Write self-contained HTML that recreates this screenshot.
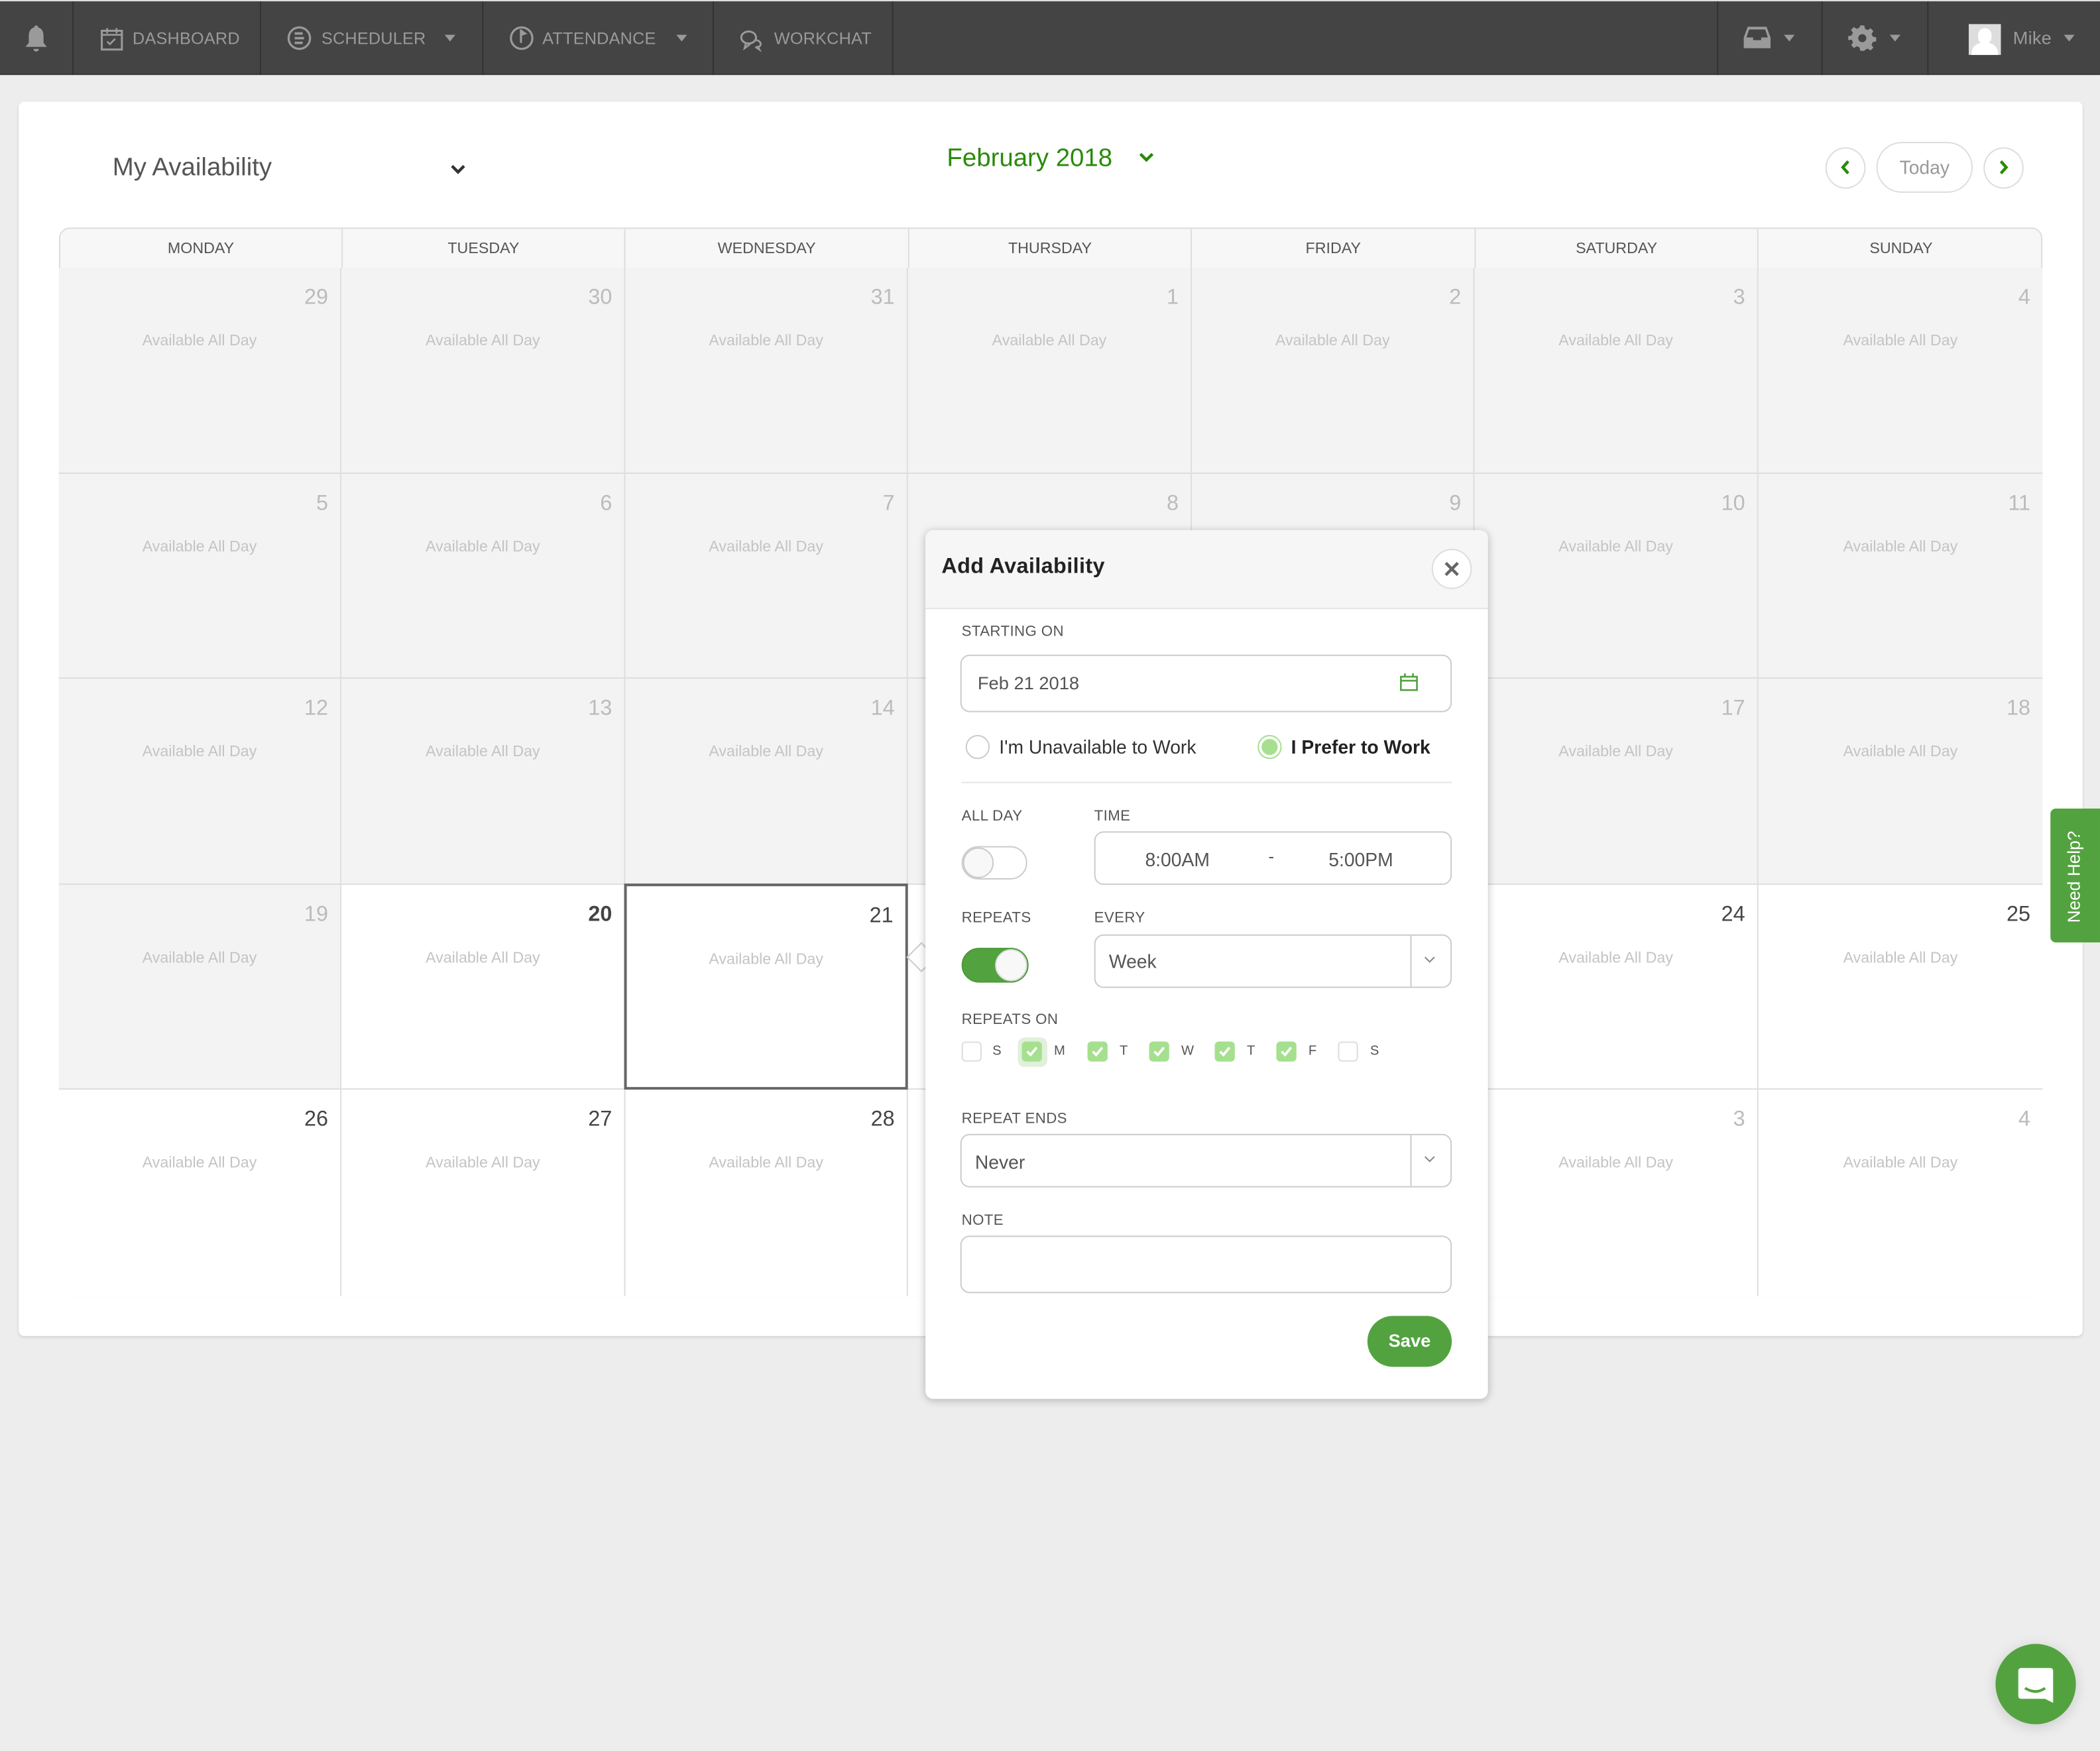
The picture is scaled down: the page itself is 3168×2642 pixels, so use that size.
<!DOCTYPE html>
<html><head><meta charset="utf-8"><style>
*{box-sizing:border-box;margin:0;padding:0}
html,body{width:3168px;height:2642px;overflow:hidden;background:#ededed}
#s{position:absolute;left:0;top:0;width:1568px;height:1308px;transform:scale(2.0204,2.0199);transform-origin:0 0;font-family:"Liberation Sans",sans-serif;color:#555}
.a{position:absolute}
#nav{left:0;top:1px;width:1568px;height:55px;background:#444;border-bottom:1px solid #3a3a3a}
.ni{position:absolute;top:0;height:55px;border-right:1px solid #333;color:#9a9a9a;font-size:12.5px;line-height:56px;letter-spacing:.1px}
.car{display:inline-block;width:0;height:0;border-left:4px solid transparent;border-right:4px solid transparent;border-top:5px solid #9a9a9a;vertical-align:middle}
#card{left:14px;top:76px;width:1541px;height:922px;background:#fff;border-radius:4px;box-shadow:0 1px 2px rgba(0,0,0,.12)}
#cal{left:44px;top:170px;width:1481px;height:798px;border:1px solid #dcdcdc;border-radius:8px;overflow:hidden;background:#fff}
.hd{position:absolute;top:0;height:30px;line-height:30px;text-align:center;font-size:11.5px;color:#555;background:#f7f7f7;border-right:1px solid #ddd;border-bottom:1px solid #ddd}
.c{position:absolute;border-right:1px solid #ddd;border-bottom:1px solid #ddd;background:#f3f3f3}
.c.w{background:#fff}
.c .n{position:absolute;right:9px;top:14px;font-size:16px;color:#bbb}
.c .n.d{color:#444}
.c .n.b{font-weight:bold;color:#444}
.c .t{position:absolute;left:0;right:0;top:49px;text-align:center;font-size:11.5px;color:#c4c4c4}
#pop{left:691px;top:396px;width:420px;height:649px;background:#fff;border-radius:6px;box-shadow:0 1px 6px rgba(0,0,0,.25)}
.lb{position:absolute;font-size:11px;color:#555;letter-spacing:.2px}
.box{position:absolute;border:1px solid #ccc;border-radius:7px;background:#fff}
.cb{position:absolute;top:778px;width:15px;height:15px;border-radius:3px}
.cb.on{background:#a5e08f}
.cb.off{border:1px solid #ddd;background:#fff}
.cb svg{position:absolute;left:3px;top:3px}
.cl{position:absolute;top:780px;font-size:10px;color:#555}
</style></head><body><div id="s">
<div class="a" style="left:0;top:0;width:1568px;height:1px;background:#ddd"></div>
<div id="nav" class="a">
 <div class="ni" style="left:0;width:55px"><svg class="a" style="left:17px;top:17px" width="20" height="22" viewBox="0 0 20 22"><path d="M10 1c-1 0-1.5.8-1.5 1.5C5.5 3.3 4.5 6 4.5 9v5L2 17h16l-2.5-3V9c0-3-1-5.7-4-6.5C11.5 1.8 11 1 10 1z M8 18.5a2 2 0 0 0 4 0z" fill="#9a9a9a"/></svg></div>
 <div class="ni" style="left:55px;width:140px"><svg class="a" style="left:20px;top:19px" width="17" height="18" viewBox="0 0 17 18"><rect x="1" y="3" width="15" height="14" fill="none" stroke="#9a9a9a" stroke-width="1.5"/><path d="M1 6h15M5 1v4M12 1v4M5 11l2 2 4-4" stroke="#9a9a9a" stroke-width="1.3" fill="none"/></svg><span class="a" style="left:44px">DASHBOARD</span></div>
 <div class="ni" style="left:195px;width:166px"><svg class="a" style="left:19px;top:18px" width="19" height="19" viewBox="0 0 19 19"><circle cx="9.5" cy="9.5" r="8" fill="none" stroke="#9a9a9a" stroke-width="1.6"/><path d="M6 6h6M6 9.5h7M6 13h6" stroke="#9a9a9a" stroke-width="1.8"/></svg><span class="a" style="left:45px">SCHEDULER</span><span class="car a" style="left:137px;top:25px"></span></div>
 <div class="ni" style="left:361px;width:172px"><svg class="a" style="left:19px;top:18px" width="19" height="19" viewBox="0 0 19 19"><circle cx="9.5" cy="9.5" r="8" fill="none" stroke="#9a9a9a" stroke-width="1.6"/><path d="M9 3v10M9 4l3 2-3 1" stroke="#9a9a9a" stroke-width="1.6" fill="#9a9a9a"/></svg><span class="a" style="left:44px">ATTENDANCE</span><span class="car a" style="left:144px;top:25px"></span></div>
 <div class="ni" style="left:533px;width:134px"><svg class="a" style="left:19px;top:20px" width="18" height="18" viewBox="0 0 18 18"><ellipse cx="7" cy="7" rx="5.5" ry="4.5" fill="none" stroke="#9a9a9a" stroke-width="1.5"/><path d="M5 11l-1 4 4-3M12 9c3 0 4 2 4 3s-1 2-2 2l1 2-3-2" stroke="#9a9a9a" stroke-width="1.4" fill="none"/></svg><span class="a" style="left:45px">WORKCHAT</span></div>
 <div class="ni" style="left:1282px;width:79px;border-left:1px solid #333"><svg class="a" style="left:18px;top:18px" width="22" height="18" viewBox="0 0 22 18"><path d="M4 1h14l3 8v8H1V9z" fill="#9a9a9a"/><path d="M5 3h12l2 6h-5v2H8V9H3z" fill="#444"/></svg><span class="car a" style="left:49px;top:25px"></span></div>
 <div class="ni" style="left:1361px;width:79px"><svg class="a" style="left:19px;top:17px" width="21" height="21" viewBox="0 0 21 21"><path d="M9 1h3l.5 2.5 2 1 2.2-1.4 2.1 2.1-1.4 2.2 1 2 2.5.5v3l-2.5.5-1 2 1.4 2.2-2.1 2.1-2.2-1.4-2 1L12 20H9l-.5-2.5-2-1-2.2 1.4-2.1-2.1 1.4-2.2-1-2L0 12V9l2.5-.5 1-2-1.4-2.2 2.1-2.1 2.200 1.4 2-1z" fill="#9a9a9a"/><circle cx="10.5" cy="10.5" r="3" fill="#444"/></svg><span class="car a" style="left:50px;top:25px"></span></div>
 <div class="ni" style="left:1440px;width:128px;border-right:none;font-size:13.5px"><div class="a" style="left:30px;top:17px;width:24px;height:23px;background:#ddd;overflow:hidden"><div class="a" style="left:7px;top:3px;width:10px;height:12px;border-radius:5px;background:#fff"></div><div class="a" style="left:2px;top:14px;width:20px;height:12px;border-radius:8px 8px 0 0;background:#fff"></div></div><span class="a" style="left:63px">Mike</span><span class="car a" style="left:101px;top:25px"></span></div>
</div>

<div id="card" class="a"></div>
<div class="a" style="left:84px;top:115px;font-size:19px;color:#555">My Availability</div>
<svg class="a" style="left:336px;top:122px" width="12" height="9" viewBox="0 0 12 9"><path d="M1.5 2l4.5 4.5L10.5 2" stroke="#333" stroke-width="2.2" fill="none"/></svg>
<div class="a" style="left:707px;top:108px;font-size:19px;color:#2a8a0a">February 2018</div>
<svg class="a" style="left:850px;top:113px" width="12" height="9" viewBox="0 0 12 9"><path d="M1.5 2l4.5 4.5L10.5 2" stroke="#2a8a0a" stroke-width="2.2" fill="none"/></svg>
<div class="a" style="left:1363px;top:110px;width:30px;height:31px;border:1px solid #ddd;border-radius:50%"></div>
<svg class="a" style="left:1373px;top:119px" width="10" height="12" viewBox="0 0 10 12"><path d="M7 1.5L3 6l4 4.5" stroke="#2a8a0a" stroke-width="2.2" fill="none"/></svg>
<div class="a" style="left:1401px;top:106px;width:72px;height:38px;border:1px solid #ddd;border-radius:19px;text-align:center;line-height:36px;font-size:14px;color:#999">Today</div>
<div class="a" style="left:1481px;top:110px;width:30px;height:31px;border:1px solid #ddd;border-radius:50%"></div>
<svg class="a" style="left:1491px;top:119px" width="10" height="12" viewBox="0 0 10 12"><path d="M3 1.5L7 6l-4 4.5" stroke="#2a8a0a" stroke-width="2.2" fill="none"/></svg>

<div id="cal" class="a">
<div class="hd" style="left:0;width:211px">MONDAY</div>
<div class="hd" style="left:211px;width:211px">TUESDAY</div>
<div class="hd" style="left:422px;width:212px">WEDNESDAY</div>
<div class="hd" style="left:634px;width:211px">THURSDAY</div>
<div class="hd" style="left:845px;width:212px">FRIDAY</div>
<div class="hd" style="left:1057px;width:211px">SATURDAY</div>
<div class="hd" style="left:1268px;width:213px;border-right:none">SUNDAY</div>
</div>
<div id="cells"></div>

<div class="a" style="left:1531px;top:604px;width:37px;height:100px;background:#52a33f;border-radius:4px 0 0 4px"></div>
<div class="a" style="left:1500px;top:646px;width:100px;height:18px;transform:rotate(-90deg);color:#fff;font-size:13px;text-align:center">Need Help?</div>

<div class="a" style="left:680px;top:707px;width:16px;height:16px;background:#fff;border:1px solid #ccc;transform:rotate(45deg)"></div>
<div id="pop" class="a">
 <div class="a" style="left:0;top:0;width:420px;height:59px;background:#f6f6f6;border-bottom:1px solid #e5e5e5;border-radius:6px 6px 0 0"></div>
 <div class="a" style="left:12px;top:19px;font-size:16px;color:#222;font-weight:bold;letter-spacing:.2px">Add Availability</div>
 <div class="a" style="left:378px;top:14px;width:30px;height:30px;border:1px solid #ddd;border-radius:50%;background:#fff"></div>
 <svg class="a" style="left:387px;top:23px" width="12" height="12" viewBox="0 0 12 12"><path d="M1.5 1.5l9 9M10.5 1.5l-9 9" stroke="#666" stroke-width="2.2"/></svg>
</div>
<div class="lb" style="left:718px;top:466px">STARTING ON</div>
<div class="box" style="left:717px;top:489px;width:367px;height:43px"></div>
<div class="a" style="left:730px;top:503px;font-size:13.5px;color:#555">Feb 21 2018</div>
<svg class="a" style="left:1045px;top:502px" width="14" height="15" viewBox="0 0 14 15"><rect x="1" y="3.5" width="12" height="10" fill="none" stroke="#52a33f" stroke-width="1.3"/><path d="M1 6.5h12M4 1v3M10 1v3" stroke="#52a33f" stroke-width="1.3"/></svg>
<div class="a" style="left:721px;top:549px;width:18px;height:18px;border:1px solid #ccc;border-radius:50%"></div>
<div class="a" style="left:746px;top:550px;font-size:14px;color:#333">I'm Unavailable to Work</div>
<div class="a" style="left:939px;top:549px;width:18px;height:18px;border:1px solid #a5e08f;border-radius:50%"></div>
<div class="a" style="left:942px;top:552px;width:12px;height:12px;background:#a5e08f;border-radius:50%"></div>
<div class="a" style="left:964px;top:550px;font-size:14px;color:#222;font-weight:bold">I Prefer to Work</div>
<div class="a" style="left:718px;top:584px;width:366px;height:1px;background:#e5e5e5"></div>
<div class="lb" style="left:718px;top:604px">ALL DAY</div>
<div class="lb" style="left:817px;top:604px">TIME</div>
<div class="a" style="left:718px;top:632px;width:49px;height:25px;border:1px solid #ccc;border-radius:13px;background:#fff"></div>
<div class="a" style="left:719px;top:633px;width:23px;height:23px;border-radius:50%;background:#f8f8f8;border:1px solid #ccc"></div>
<div class="box" style="left:817px;top:621px;width:267px;height:40px"></div>
<div class="a" style="left:855px;top:634px;font-size:14px;color:#555">8:00AM</div>
<div class="a" style="left:947px;top:632px;font-size:13px;color:#555">-</div>
<div class="a" style="left:992px;top:634px;font-size:14px;color:#555">5:00PM</div>
<div class="lb" style="left:718px;top:680px">REPEATS</div>
<div class="lb" style="left:817px;top:680px">EVERY</div>
<div class="a" style="left:718px;top:708px;width:50px;height:26px;border-radius:13px;background:#52a33f;border:1px solid #4a9a38"></div>
<div class="a" style="left:743px;top:709px;width:24px;height:24px;border-radius:50%;background:#f8f8f8;border:1px solid #ddd"></div>
<div class="box" style="left:817px;top:698px;width:267px;height:40px"></div>
<div class="a" style="left:1053px;top:699px;width:1px;height:38px;background:#ccc"></div>
<svg class="a" style="left:1063px;top:714px" width="9" height="6" viewBox="0 0 9 6"><path d="M1 1l3.5 3.5L8 1" stroke="#888" fill="none"/></svg>
<div class="a" style="left:828px;top:710px;font-size:14px;color:#555">Week</div>
<div class="lb" style="left:718px;top:756px">REPEATS ON</div>
<div class="a" style="left:760px;top:775px;width:22px;height:22px;border-radius:5px;background:#e0f0da"></div>
<div id="cbs"></div>
<div class="lb" style="left:718px;top:830px">REPEAT ENDS</div>
<div class="box" style="left:717px;top:847px;width:367px;height:40px"></div>
<div class="a" style="left:1053px;top:848px;width:1px;height:38px;background:#ccc"></div>
<svg class="a" style="left:1063px;top:863px" width="9" height="6" viewBox="0 0 9 6"><path d="M1 1l3.5 3.5L8 1" stroke="#888" fill="none"/></svg>
<div class="a" style="left:728px;top:860px;font-size:14px;color:#555">Never</div>
<div class="lb" style="left:718px;top:906px">NOTE</div>
<div class="box" style="left:717px;top:923px;width:367px;height:43px"></div>
<div class="a" style="left:1021px;top:983px;width:63px;height:38px;border-radius:19px;background:#52a33f;color:#fff;font-weight:bold;font-size:13.5px;text-align:center;line-height:38px">Save</div>

<div class="a" style="left:1490px;top:1228px;width:60px;height:60px;border-radius:50%;background:#52a33f;box-shadow:0 2px 10px rgba(0,0,0,.15)"></div>
<svg class="a" style="left:1505px;top:1243px" width="30" height="30" viewBox="0 0 30 30"><path d="M5 3h22a2 2 0 0 1 2 2v24l-6-3H5a2 2 0 0 1-2-2V5a2 2 0 0 1 2-2z" fill="#fff" transform="translate(-1 0)"/><path d="M7 18q8 5 15 0" stroke="#52a33f" stroke-width="2" fill="none"/></svg>
</div>
<script>
var rows=[
[["29",0],["30",0],["31",0],["1",0],["2",0],["3",0],["4",0]],
[["5",0],["6",0],["7",0],["8",0],["9",0],["10",0],["11",0]],
[["12",0],["13",0],["14",0],["15",0],["16",0],["17",0],["18",0]],
[["19",0],["20",2],["21",3],["22",1],["23",1],["24",1],["25",1]],
[["26",1],["27",1],["28",1],["1",4],["2",4],["3",4],["4",4]]];
var h="",tops=[200,354,507,661,814];
var X=[];for(var i=0;i<=7;i++)X.push(44+Math.round(i*211.43));X[7]=1525;
for(var r=0;r<5;r++)for(var c=0;c<7;c++){var d=rows[r][c],x=X[c],w=X[c+1]-x;
var hh=(r<4?tops[r+1]:968)-tops[r];
var cls="c"+(d[1]>0?" w":"");var st="left:"+x+"px;top:"+tops[r]+"px;width:"+w+"px;height:"+hh+"px;";
if(c==6)st+="border-right:none;";
if(r==4)st+="border-bottom:none;";
if(d[1]==3)st="left:"+(x-1)+"px;top:"+(tops[r]-1)+"px;width:"+(w+1)+"px;height:"+(hh+1)+"px;border:2px solid #666;";
var nc=d[1]==2?"n b":(d[1]==1||d[1]==3)?"n d":"n";
h+='<div class="'+cls+'" style="'+st+'"><div class="'+nc+'">'+d[0]+'</div><div class="t">Available All Day</div></div>';}
var z=document.getElementById("cells");z.innerHTML=h;
var s=document.getElementById("s");
while(z.firstChild)s.insertBefore(z.firstChild,z);
var xs=[718,763,812,858,907,953,999],ls=[741,787,836,882,931,977,1023],L="SMTWTFS",q="";
for(var i=0;i<7;i++){var on=i>0&&i<6;q+='<div class="cb '+(on?'on':'off')+'" style="left:'+xs[i]+'px">'+(on?'<svg width="9" height="9" viewBox="0 0 9 9"><path d="M1 4.5l2.5 2.5L8 1.5" stroke="#fff" stroke-width="1.8" fill="none"/></svg>':'')+'</div><div class="cl" style="left:'+ls[i]+'px">'+L[i]+'</div>';}
document.getElementById("cbs").innerHTML=q;
</script>
</body></html>
